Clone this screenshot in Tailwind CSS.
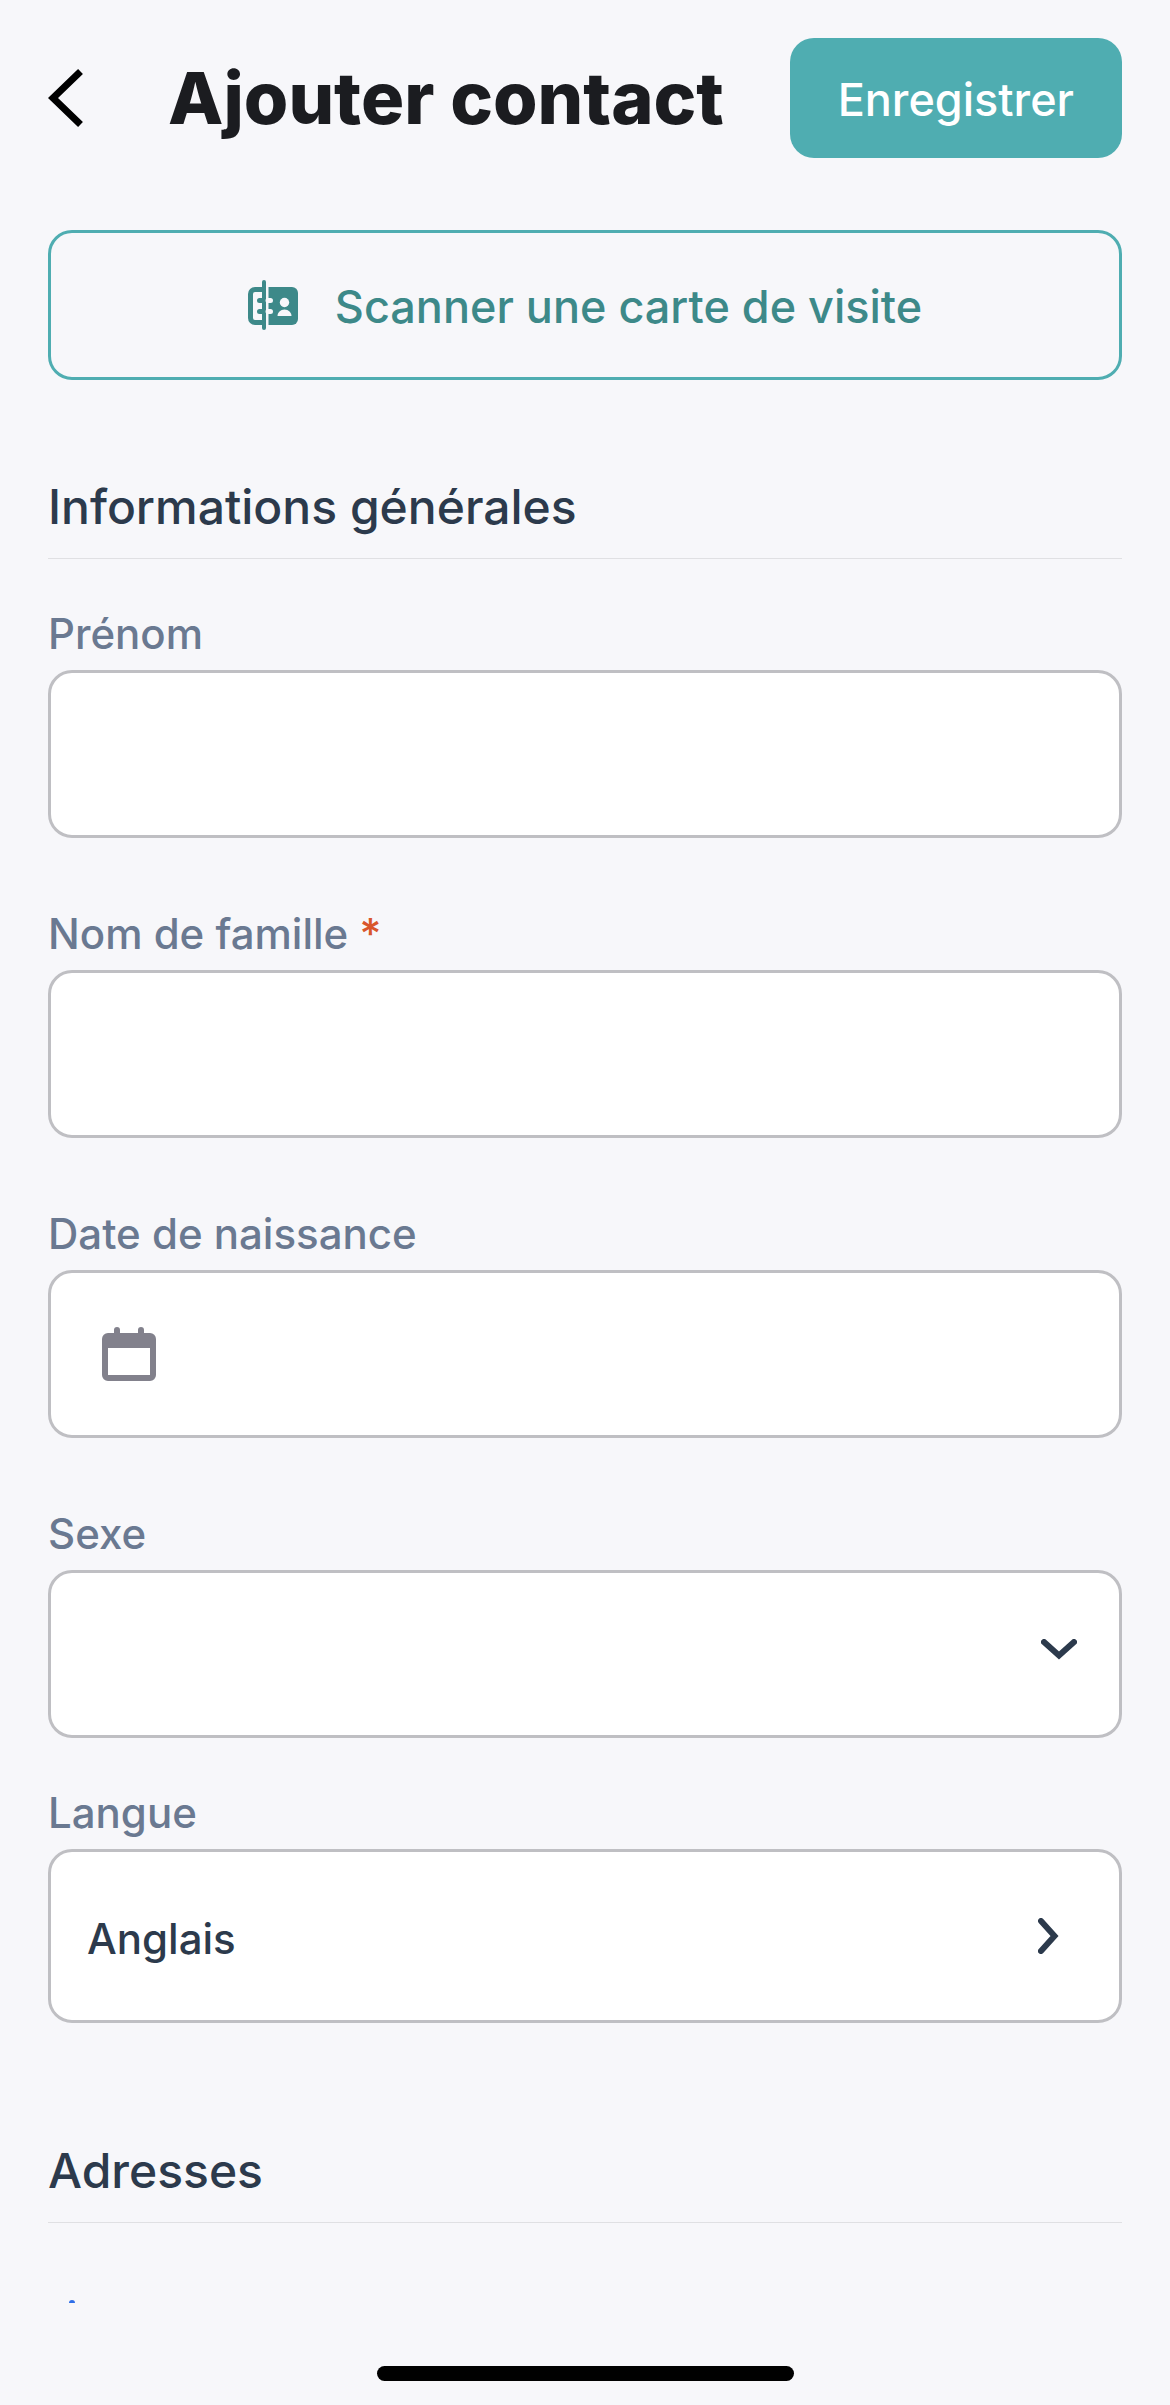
<!DOCTYPE html>
<html lang="fr">
<head>
    <meta charset="UTF-8">
    <meta name="viewport" content="width=device-width, initial-scale=1.0">
    <title>Ajouter contact</title>
    <script src="https://cdn.jsdelivr.net/npm/@tailwindcss/browser@4"></script>
</head>
<body class="flex h-screen flex-col bg-[#f7f7fa] font-['Inter',sans-serif] font-medium text-[#2c3a4c]">
<!-- Header -->
<header class="flex items-center justify-between px-12 pt-[38px] pb-6">
    <div class="flex items-center gap-[84px]">
        <button type="button">
            <svg class="h-[60px] w-9" viewBox="0 0 36 60" fill="none" stroke="#000" stroke-width="7">
                <path d="M32.500 3.500L5 30l27.500 26.500" />
            </svg>
        </button>
        <h1 class="text-[72px] leading-[88px] font-extrabold text-[#1b1c20]">Ajouter contact</h1>
    </div>
    <button type="submit" form="contactForm" class="h-[120px] rounded-3xl bg-[#4fadb1] px-12 pt-1 text-[45px] text-white">Enregistrer</button>
</header>

<!-- Form -->
<main class="min-h-0 flex-1 overflow-y-auto px-12 pt-12 [scrollbar-width:none]">
    <button type="button" class="flex h-[150px] w-full items-center justify-center gap-[37px] rounded-3xl border-3 border-[#4fadb1] text-[45px] text-[#3d8989]">
        <svg class="size-[50px]" viewBox="0 0 50 50" fill="none">
            <path d="M15 9.500H7A4.500 4.500 0 0 0 2.500 14v24A4.500 4.500 0 0 0 7 42.500h8" stroke="currentColor" stroke-width="5" />
            <path d="M11.500 20.500H16M11.500 31.500H16" stroke="currentColor" stroke-width="5" stroke-linecap="round" />
            <path d="M16 2v46" stroke="currentColor" stroke-width="4" stroke-linecap="round" />
            <path d="M20.500 7H44a6 6 0 0 1 6 6v26a6 6 0 0 1-6 6H20.500z" fill="currentColor" />
            <path d="M20 20.500h2.500M20 31.500h2.500" stroke="#f7f7fa" stroke-width="5" stroke-linecap="round" />
            <circle cx="36.500" cy="22.500" r="4.700" fill="#f7f7fa" />
            <path d="M29.500 36c0-3.500 3-6.500 7-6.500s7 3 7 6.500z" fill="#f7f7fa" />
        </svg>
        <span class="pt-1">Scanner une carte de visite</span>
    </button>

    <form id="contactForm">
        <h2 class="mt-[97px] border-b border-[#e0e0e3] pb-[22px] text-5xl leading-[59px]">Informations générales</h2>

        <div class="mt-12 flex flex-col gap-2.5">
            <label for="firstName" class="text-[42px] leading-[53px] text-[#6a7991]">Prénom</label>
            <input type="text" id="firstName" class="h-[168px] w-full rounded-3xl border-3 border-[#bfbfc3] bg-white px-10 text-[42px] outline-none">
        </div>

        <div class="mt-[69px] flex flex-col gap-2.5">
            <label for="lastName" class="text-[42px] leading-[53px] text-[#6a7991]">Nom de famille <span class="text-[#d9562b]">*</span></label>
            <input type="text" id="lastName" required class="h-[168px] w-full rounded-3xl border-3 border-[#bfbfc3] bg-white px-10 text-[42px] outline-none">
        </div>

        <div class="mt-[69px] flex flex-col gap-2.5">
            <label for="birthDate" class="text-[42px] leading-[53px] text-[#6a7991]">Date de naissance</label>
            <div class="flex h-[168px] items-center gap-9 rounded-3xl border-3 border-[#bfbfc3] bg-white px-[51px]">
                <svg class="size-[54px] shrink-0" viewBox="0 0 54 54" fill="#82818c">
                    <path fill-rule="evenodd" d="M12 6V3a3 3 0 0 1 6 0v3h18V3a3 3 0 0 1 6 0v3h6a6 6 0 0 1 6 6v36a6 6 0 0 1-6 6H6a6 6 0 0 1-6-6V12a6 6 0 0 1 6-6zM6 21v27h42V21z" />
                </svg>
                <input type="text" id="birthDate" class="h-full min-w-0 flex-1 text-[42px] outline-none">
            </div>
        </div>

        <div class="mt-[69px] flex flex-col gap-2.5">
            <label for="gender" class="text-[42px] leading-[53px] text-[#6a7991]">Sexe</label>
            <div class="relative">
                <select id="gender" class="block h-[168px] w-full appearance-none rounded-3xl border-3 border-[#bfbfc3] bg-white px-10 text-[42px] outline-none">
                    <option value=""></option>
                </select>
                <svg class="pointer-events-none absolute top-[69px] right-[45px] h-[21px] w-9" viewBox="0 0 36 21" fill="none" stroke="currentColor" stroke-width="6" stroke-linecap="round">
                    <path d="M3 3l15 13.500L33 3" />
                </svg>
            </div>
        </div>

        <div class="mt-12 flex flex-col gap-2.5">
            <label for="language" class="text-[42px] leading-[53px] text-[#6a7991]">Langue</label>
            <button type="button" id="language" class="flex h-[174px] w-full items-center justify-between rounded-3xl border-3 border-[#bfbfc3] bg-white pr-[60px] pl-9 text-[42px]">
                <span class="pt-1">Anglais</span>
                <svg class="h-9 w-[21px]" viewBox="0 0 21 36" fill="none" stroke="currentColor" stroke-width="6" stroke-linecap="round">
                    <path d="M3 3l13.500 15L3 33" />
                </svg>
            </button>
        </div>

        <h2 class="mt-[118px] border-b border-[#e0e0e3] pb-[22px] text-5xl leading-[59px]">Adresses</h2>

        <!-- Add address -->
        <button type="button" class="mt-[71px] block text-[#2f6fe8]">
            <svg class="size-12" viewBox="0 0 48 48" fill="none" stroke="currentColor" stroke-width="6" stroke-linecap="round">
                <path d="M24 9v36M6 27h36" />
            </svg>
        </button>
    </form>
</main>

<!-- Home indicator -->
<footer class="flex h-[102px] shrink-0 items-end justify-center pb-6">
    <div class="h-[15px] w-[417px] rounded-full bg-black"></div>
</footer>
</body>
</html>
